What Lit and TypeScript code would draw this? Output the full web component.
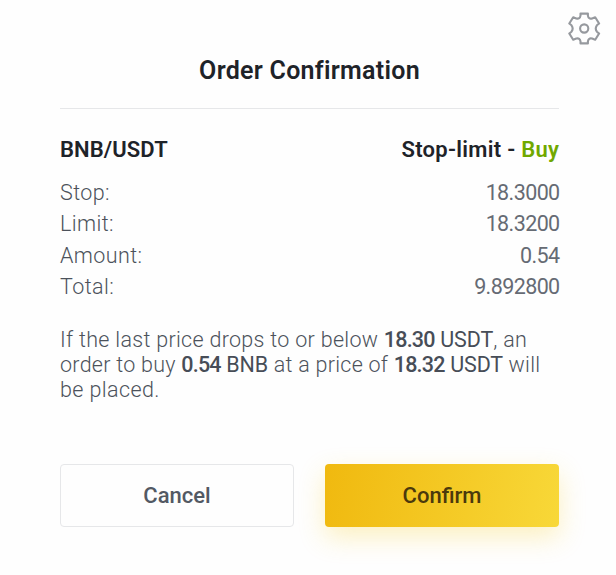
import { LitElement, html, css, svg } from "lit";
import { customElement } from "lit/decorators.js";

const gear = svg`<path d="M12.5 1.6h7.4v2q.6 3.8 4.2 2.8l3.1-1.2 3.9 6.3-2.2 1.8q-2.3 3.2 0 6.4l2.2 1.8-3.9 6.3-3.1-1.2q-3.6-1-4.2 2.8v2h-7.4v-2q-.6-3.8-4.2-2.8l-3.1 1.2-3.9-6.3 2.2-1.8q2.3-3.2 0-6.4l-2.2-1.8 3.9-6.3 3.1 1.2q3.6 1 4.2-2.8z"/><circle cx="16.2" cy="16.5" r="4.1"/>`;

const rows = [
  { label: "Stop:", value: "18.3000" },
  { label: "Limit:", value: "18.3200" },
  { label: "Amount:", value: "0.54" },
  { label: "Total:", value: "9.892800" },
];

@customElement("app-root")
export class AppRoot extends LitElement {
  static styles = css`
    :host {
      display: block;
      position: relative;
      box-sizing: border-box;
      height: 575px;
      padding: 50px 57px 0 60px;
      overflow: hidden;
      background: #fefefe;
      color: #666b74;
      font: 400 21.5px/31.2px Roboto, "Liberation Sans", sans-serif;
      white-space: nowrap;
    }
    .gear {
      position: absolute;
      left: 568px;
      top: 12px;
      width: 33px;
      height: 33px;
      fill: none;
      stroke: #96999e;
      stroke-width: 2.1;
      stroke-linejoin: round;
    }
    .title {
      margin: 0;
      height: 59px;
      box-sizing: border-box;
      border-bottom: 1px solid #e6e7e9;
      color: #1e2329;
      font-size: 25px;
      line-height: 41px;
      font-weight: 600;
      letter-spacing: 0.28px;
      text-align: center;
    }
    .row {
      display: flex;
      justify-content: space-between;
    }
    .head {
      margin-top: 25px;
      margin-bottom: 12px;
      color: #1e2329;
      font-weight: 600;
      font-size: 22px;
    }
    .pair { letter-spacing: 0.1px; }
    .kind { letter-spacing: 0.28px; margin-right: -0.28px; }
    .buy { color: #70a800; }
    .label { font-weight: 300; color: #4c525b; letter-spacing: 0.4px; }
    .value { letter-spacing: -0.6px; margin-right: -0.6px; }
    .note {
      margin: 25px 0 0;
      line-height: 25px;
      font-weight: 300;
      color: #4c525b;
    }
    .line { display: block; }
    .l1 { letter-spacing: 0.3px; }
    .l2 { letter-spacing: 0.27px; }
    .l3 { letter-spacing: 0.4px; }
    .num { font-weight: 500; color: #474d57; letter-spacing: -0.8px; }
    .unit { font-weight: 400; color: #474d57; letter-spacing: -0.1px; }
    .actions {
      display: grid;
      grid-template-columns: 234px 234px;
      justify-content: space-between;
      margin-top: 62px;
    }
    .btn {
      box-sizing: border-box;
      height: 63px;
      padding: 0;
      border: 1px solid #e6e7e9;
      border-radius: 4px;
      background: #fefefe;
      color: #535963;
      font: 500 22px/61px Roboto, "Liberation Sans", sans-serif;
    }
    .primary {
      border: 0;
      background: linear-gradient(100deg, #f0b90f, #f8d838);
      box-shadow: 0 10px 26px rgba(248, 209, 50, 0.3);
      color: #4b390c;
    }
  `;

  render() {
    return html`
      <svg class="gear" viewBox="0 0 33 33">${gear}</svg>
      <h1 class="title">Order Confirmation</h1>
      <div class="row head">
        <span class="pair">BNB/USDT</span>
        <span class="kind">Stop-limit - <span class="buy">Buy</span></span>
      </div>
      ${rows.map((r) => html`<div class="row"><span class="label">${r.label}</span><span class="value">${r.value}</span></div>`)}
      <p class="note">
        <span class="line l1">If the last price drops to or below <span class="num">18.30</span> <span class="unit">USDT</span>, an</span>
        <span class="line l2">order to buy <span class="num">0.54</span> <span class="unit">BNB</span> at a price of <span class="num">18.32</span> <span class="unit">USDT</span> will</span>
        <span class="line l3">be placed.</span>
      </p>
      <div class="actions">
        <button class="btn cancel">Cancel</button>
        <button class="btn primary">Confirm</button>
      </div>
    `;
  }
}
